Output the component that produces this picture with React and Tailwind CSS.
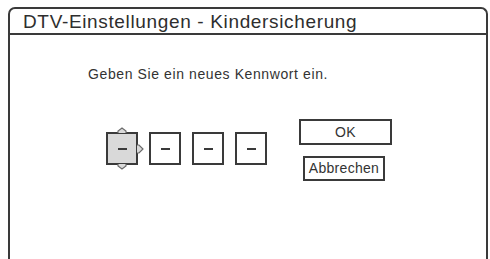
import React from 'react';

const font = { fontFamily: '"Liberation Sans", Arial, sans-serif' };

function DigitBox({ active }) {
  return (
    <div
      className={`relative w-[32px] h-[33px] border-2 border-[#3a3a3a] flex items-center justify-center ${
        active ? 'bg-[#d9d9d9]' : 'bg-white'
      }`}
    >
      <div className="w-[9px] h-[2px] bg-[#3a3a3a]" />
      {active && (
        <>
          <svg className="absolute left-1/2 -translate-x-1/2 -top-[7px]" width="10" height="7" viewBox="0 0 10 7">
            <path d="M1 6 L1 4 L5 1 L9 4 L9 6" fill="#d9d9d9" stroke="#6a6a6a" strokeWidth="1.2" />
          </svg>
          <svg className="absolute left-1/2 -translate-x-1/2 -bottom-[7px]" width="10" height="7" viewBox="0 0 10 7">
            <path d="M1 1 L1 3 L5 6 L9 3 L9 1" fill="#d9d9d9" stroke="#6a6a6a" strokeWidth="1.2" />
          </svg>
          <svg className="absolute top-1/2 -translate-y-1/2 -right-[8px]" width="8" height="10" viewBox="0 0 8 10">
            <path d="M1 1 L3 1 L7 5 L3 9 L1 9" fill="#d9d9d9" stroke="#6a6a6a" strokeWidth="1.2" />
          </svg>
        </>
      )}
    </div>
  );
}

export default function App() {
  return (
    <div className="w-[490px] h-[259px] bg-white overflow-hidden text-[#333]" style={font}>
      <div className="ml-[8px] mt-[7px] w-[480px] h-[252px] border-2 border-b-0 border-[#3a3a3a] rounded-t-[7px] flex flex-col">
        <div className="h-[26px] border-b-2 border-[#3a3a3a] pl-[13px] flex items-center">
          <span className="text-[19px] leading-none tracking-[0.65px] text-[#2e2e2e]">DTV-Einstellungen - Kindersicherung</span>
        </div>
        <div className="pl-[78px]">
          <p className="mt-[31px] text-[14px] leading-[16px] tracking-[0.6px] text-[#333]">Geben Sie ein neues Kennwort ein.</p>
          <div className="flex mt-[37px] ml-[18px]">
            <div className="flex gap-[11px] mt-[13px]">
              <DigitBox active />
              <DigitBox />
              <DigitBox />
              <DigitBox />
            </div>
            <div className="flex flex-col items-start ml-[32px]">
              <div className="w-[93px] h-[26px] border-2 border-[#3a3a3a] flex items-center justify-center text-[14px] tracking-[0.3px]">
                OK
              </div>
              <div className="ml-[4px] mt-[11px] w-[82px] h-[25px] border-2 border-[#3a3a3a] flex items-center justify-center text-[14px] tracking-[0.3px]">
                Abbrechen
              </div>
            </div>
          </div>
        </div>
      </div>
    </div>
  );
}
